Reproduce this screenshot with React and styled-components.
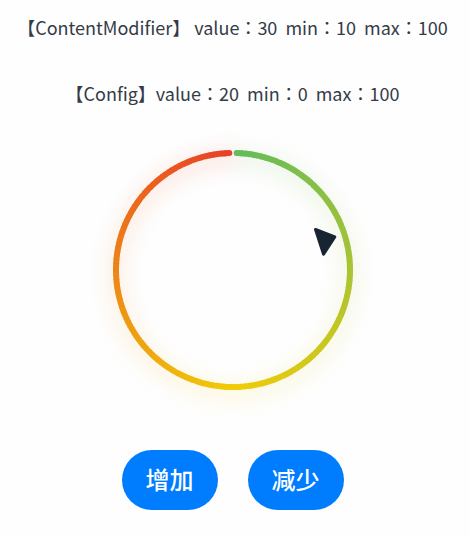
import React, { useState } from "react";
import styled, { createGlobalStyle } from "styled-components";

const GlobalStyle = createGlobalStyle`
  body {
    margin: 0;
    background: #fefefe;
  }
`;

const Page = styled.main`
  display: flex;
  flex-direction: column;
  align-items: center;
  padding: 15px 4px 24px 0;
  color: #343b47;
`;

const Summary = styled.p`
  margin: 0 0 42px;
  font-family: "Noto Sans CJK TC", sans-serif;
  font-size: 18px;
  line-height: 24px;
  white-space: pre;
`;

const Dial = styled.svg`
  display: block;
  width: 240px;
  height: 240px;
  margin-top: 3px;
  overflow: visible;
`;

const Glow = styled.g`
  filter: blur(10px);
  opacity: 0.13;
`;

const Actions = styled.div`
  display: flex;
  gap: 30px;
  margin-top: 60px;
`;

const ActionButton = styled.button`
  height: 60px;
  padding: 0 24px 2px;
  border: 0;
  border-radius: 30px;
  background: #007dff;
  color: #fff;
  font-family: "Noto Sans CJK SC", sans-serif;
  font-size: 24px;
  font-weight: 500;
  line-height: 32px;
  cursor: pointer;
`;

const STOPS = [
  [100, 187, 92],
  [241, 204, 8],
  [232, 64, 38],
];
const SEGMENTS = 180;
const START = 1.8;
const SWEEP = 356.4;

const colorAt = (t) => {
  const k = t < 0.5 ? 0 : 1;
  const f = t * 2 - k;
  const mix = STOPS[k].map((c, i) => Math.round(c + (STOPS[k + 1][i] - c) * f));
  return `rgb(${mix.join(",")})`;
};

const point = (deg) => {
  const a = (deg * Math.PI) / 180;
  return `${(120 + 117 * Math.sin(a)).toFixed(3)} ${(120 - 117 * Math.cos(a)).toFixed(3)}`;
};

const arcs = Array.from({ length: SEGMENTS }, (_, i) => {
  const step = SWEEP / SEGMENTS;
  const from = START + i * step;
  const to = Math.min(from + step + 0.4, START + SWEEP);
  return {
    d: `M${point(from)} A117 117 0 0 1 ${point(to)}`,
    color: colorAt((i + 0.5) / SEGMENTS),
    cap: i === 0 || i === SEGMENTS - 1 ? "round" : "butt",
  };
});

const Ring = ({ width }) =>
  arcs.map((a) => (
    <path
      key={a.d}
      d={a.d}
      fill="none"
      stroke={a.color}
      strokeWidth={width}
      strokeLinecap={a.cap}
    />
  ));

const MIN = 0;
const MAX = 100;

function Gauge({ value }) {
  const angle = ((value - MIN) / (MAX - MIN)) * 360;
  return (
    <Dial viewBox="0 0 240 240" role="img" aria-label={`${value}`}>
      <Glow>
        <g transform="translate(0 5)">
          <Ring width="16" />
        </g>
      </Glow>
      <Ring width="6" />
      <g transform={`rotate(${angle} 120 120)`}>
        <path
          d="M120 13 L133 29 L107 29 Z"
          fill="#182431"
          stroke="#182431"
          strokeWidth="3"
          strokeLinejoin="round"
        />
      </g>
    </Dial>
  );
}

export default function App() {
  const [value, setValue] = useState(20);
  const change = (by) => setValue((v) => Math.max(MIN, Math.min(MAX, v + by)));
  return (
    <Page>
      <GlobalStyle />
      <Summary>【ContentModifier】 value：{value + 10}  min：10  max：100</Summary>
      <Summary>【Config】value：{value}  min：{MIN}  max：{MAX}</Summary>
      <Gauge value={value} />
      <Actions>
        <ActionButton type="button" onClick={() => change(1)}>增加</ActionButton>
        <ActionButton type="button" onClick={() => change(-1)}>减少</ActionButton>
      </Actions>
    </Page>
  );
}
